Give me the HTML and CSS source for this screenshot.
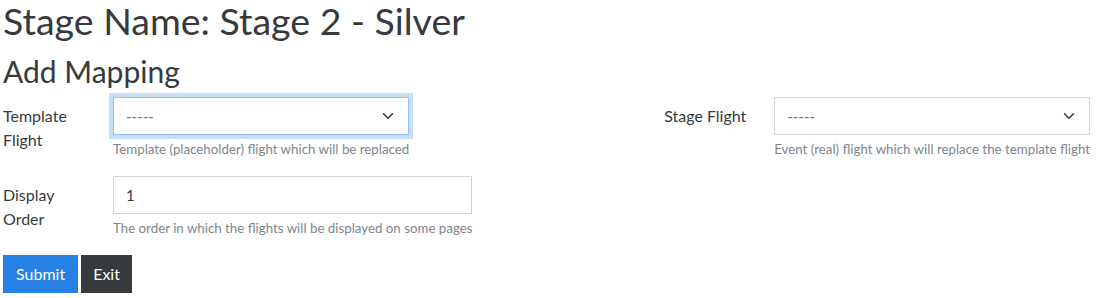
FILE: index.html
```html
<!DOCTYPE html>
<html lang="en">
<head>
<meta charset="utf-8">
<title>Add Mapping</title>
<link rel="stylesheet" href="styles.css">
</head>
<body>
<main class="page">
  <h1 class="title">Stage Name: Stage 2 - Silver</h1>
  <h2 class="subtitle">Add Mapping</h2>
  <form class="form">
    <div class="form-row">
      <div class="group">
        <label class="label" for="tpl">Template Flight</label>
        <div class="field">
          <select id="tpl" class="control select focused">
            <option>-----</option>
          </select>
          <div class="help">Template (placeholder) flight which will be replaced</div>
        </div>
      </div>
      <div class="group">
        <label class="label" for="stage">Stage Flight</label>
        <div class="field">
          <select id="stage" class="control select">
            <option>-----</option>
          </select>
          <div class="help">Event (real) flight which will replace the template flight</div>
        </div>
      </div>
    </div>
    <div class="form-row">
      <div class="group">
        <label class="label" for="order">Display Order</label>
        <div class="field">
          <input id="order" class="control" type="text" value="1">
          <div class="help">The order in which the flights will be displayed on some pages</div>
        </div>
      </div>
    </div>
    <div class="actions">
      <button type="button" class="btn btn-primary">Submit</button>
      <button type="button" class="btn btn-dark">Exit</button>
    </div>
  </form>
</main>
</body>
</html>
```
FILE: styles.css
```css
html, body {
  margin: 0;
  padding: 0;
  background: #fff;
}
body {
  font-family: "Lato", "Liberation Sans", sans-serif;
  font-size: 16px;
  line-height: 1.5;
  color: #373a3c;
}
.page {
  padding: 0 24px 0 3px;
}
.title {
  font-size: 37.5px;
  font-weight: 400;
  line-height: 48px;
  margin: -3px 0 7px;
}
.subtitle {
  font-size: 30px;
  font-weight: 400;
  line-height: 38px;
  margin: 0 0 7px;
}
.form-row {
  display: flex;
  justify-content: space-between;
  margin-bottom: 16px;
}
.group {
  display: flex;
  align-items: flex-start;
}
.label {
  width: 110px;
  flex: none;
  padding-top: 7px;
  line-height: 24px;
  box-sizing: border-box;
  padding-right: 22px;
}
.field {
  display: flex;
  flex-direction: column;
  width: max-content;
}
.control {
  display: block;
  width: 100%;
  height: 38px;
  box-sizing: border-box;
  padding: 6px 12px;
  font: inherit;
  font-size: 15px;
  color: #373a3c;
  background: #fff;
  border: 1px solid #ced4da;
  border-radius: 0;
  outline: none;
}
.select {
  appearance: none;
  -webkit-appearance: none;
  padding-right: 36px;
  background-image: url("data:image/svg+xml,%3csvg xmlns='http://www.w3.org/2000/svg' viewBox='0 0 16 16'%3e%3cpath fill='none' stroke='%23343a40' stroke-linecap='round' stroke-linejoin='round' stroke-width='2' d='M2 5l6 6 6-6'/%3e%3c/svg%3e");
  background-repeat: no-repeat;
  background-position: right 12px center;
  background-size: 16px 12px;
  color: #6c757d;
}
.focused {
  border-color: #93c0f1;
  box-shadow: 0 0 0 4px rgba(39, 128, 227, 0.25);
}
.help {
  margin-top: 4px;
  font-size: 13.3px;
  line-height: 21px;
  color: #80868e;
}
.actions {
  display: flex;
  gap: 3px;
}
.btn {
  font: inherit;
  font-size: 16px;
  line-height: 24px;
  padding: 6px 12px;
  border: 1px solid transparent;
  border-radius: 0;
  color: #fff;
}
.btn-primary {
  background: #2780e3;
  border-color: #2780e3;
}
.btn-dark {
  background: #373a3c;
  border-color: #373a3c;
  padding: 6px 11px;
}
```
